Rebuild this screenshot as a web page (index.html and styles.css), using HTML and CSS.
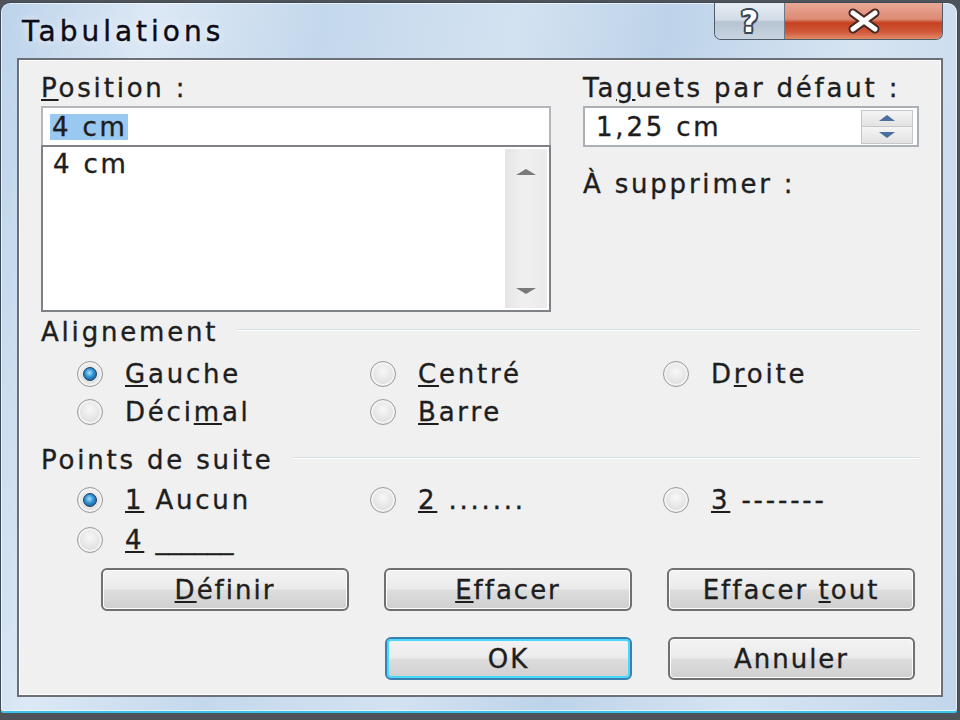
FILE: index.html
```html
<!DOCTYPE html>
<html lang="fr">

<head>
  <meta charset="UTF-8">
  <title>Tabulations</title>
  <link rel="stylesheet" href="styles.css">
</head>

<body>

  <div class="window">

    <!-- barre de titre -->
    <div class="titlebar">
      <span class="title">Tabulations</span>
      <div class="caption-btns">
        <div class="cap-help">?</div>
        <div class="cap-close">
          <svg width="44" height="26" viewBox="0 0 44 26">
            <path d="M11 5 L33 21 M33 5 L11 21" stroke="#4a2a24" stroke-width="9" stroke-linecap="round" fill="none" />
            <path d="M11 5 L33 21 M33 5 L11 21" stroke="#fff" stroke-width="5" stroke-linecap="round" fill="none" />
          </svg>
        </div>
      </div>
    </div>

    <div class="content">

      <div class="top">
        <div class="col-left">
          <div class="label"><u>P</u>osition :</div>
          <div class="input"><span class="sel">4 cm</span></div>
          <div class="listbox">
            <div class="list-items">4 cm</div>
            <div class="scrollbar">
              <span class="arrow-up"></span>
              <span class="arrow-down"></span>
            </div>
          </div>
        </div>
        <div class="col-right">
          <div class="label">Ta<u>g</u>uets par défaut :</div>
          <div class="spin">
            <span class="spin-value">1,25 cm</span>
            <div class="spin-btns">
              <div class="spin-up"><span></span></div>
              <div class="spin-down"><span></span></div>
            </div>
          </div>
          <div class="label delete-label">À supprimer :</div>
        </div>
      </div>

      <!-- Alignement -->
      <div class="group-title"><span>Alignement</span><i></i></div>
      <div class="radios">
        <label class="radio checked"><b></b><span><u>G</u>auche</span></label>
        <label class="radio"><b></b><span><u>C</u>entré</span></label>
        <label class="radio"><b></b><span>D<u>r</u>oite</span></label>
        <label class="radio"><b></b><span>Déci<u>m</u>al</span></label>
        <label class="radio"><b></b><span><u>B</u>arre</span></label>
      </div>

      <!-- Points de suite -->
      <div class="group-title"><span>Points de suite</span><i></i></div>
      <div class="radios leaders">
        <label class="radio checked"><b></b><span><u>1</u> Aucun</span></label>
        <label class="radio"><b></b><span><u>2</u> .......</span></label>
        <label class="radio"><b></b><span><u>3</u> -------</span></label>
        <label class="radio"><b></b><span><u>4</u> <span class="solid">______</span></span></label>
      </div>

      <div class="btn-row">
        <button class="btn"><u>D</u>éfinir</button>
        <button class="btn"><u>E</u>ffacer</button>
        <button class="btn">Effacer <u>t</u>out</button>
      </div>
      <div class="btn-row btn-row-end">
        <button class="btn btn-default">OK</button>
        <button class="btn">Annuler</button>
      </div>

    </div>
  </div>

</body>

</html>
```

FILE: styles.css
```css
body {
  margin: 0;
  background: #4d5358;
  font-family: "DejaVu Sans", "Noto Sans", sans-serif;
  color: #1e1e1e;
  overflow: hidden;
}

.window {
  margin-top: 2px;
  width: 956px;
  height: 708px;
  border: 1px solid #3d4a57;
  border-bottom: 2px solid #38c4e8;
  border-radius: 10px 10px 4px 4px;
  background: linear-gradient(100deg, #bcd3ea 0%, #dce8f5 14%, #c4d8ec 30%, #d3e2f1 48%, #bed3e9 62%, #d6e4f2 80%, #c2d6eb 100%);
  box-shadow: inset 0 0 0 1px rgba(255, 255, 255, 0.6);
}

/* barre de titre */
.titlebar {
  height: 55px;
  display: flex;
  align-items: flex-start;
}

.title {
  font-size: 28px;
  letter-spacing: 4px;
  margin: 12px 0 0 21px;
  color: #0c0c18;
  -webkit-text-stroke: 0.4px #0c0c18;
  text-shadow: 0 0 8px rgba(255, 255, 255, 0.9);
}

.caption-btns {
  margin-left: auto;
  margin-right: 14px;
  display: flex;
  height: 36px;
  border: 1px solid #4f5d6b;
  border-top: none;
  border-radius: 0 0 7px 7px;
  overflow: hidden;
}

.cap-help {
  width: 69px;
  display: flex;
  justify-content: center;
  align-items: center;
  font-weight: bold;
  font-size: 30px;
  color: #fff;
  text-shadow: -1.5px -1.5px 0 #3b4652, 1.5px -1.5px 0 #3b4652, -1.5px 1.5px 0 #3b4652, 1.5px 1.5px 0 #3b4652, 0 2px 0 #3b4652, 0 -2px 0 #3b4652, 2px 0 0 #3b4652, -2px 0 0 #3b4652;
  background: linear-gradient(#e6ecf2 0%, #d1dbe6 48%, #b6c3d2 52%, #c8d4e0 100%);
  border-right: 1px solid #6b7886;
}

.cap-close {
  width: 157px;
  display: flex;
  justify-content: center;
  align-items: center;
  background: linear-gradient(#e9a896 0%, #dc8a74 45%, #c5401f 55%, #d0583a 80%, #e28a68 100%);
}

/* zone cliente */
.content {
  box-sizing: border-box;
  margin-left: 16px;
  width: 926px;
  height: 639px;
  background: #f0f0f0;
  border: 2px solid #6c7076;
  box-shadow: inset 0 0 0 1px #ffffff;
  padding: 12px 22px 0 22px;
  font-size: 26px;
  letter-spacing: 2.8px;
  -webkit-text-stroke: 0.35px #1e1e1e;
}

.top {
  display: flex;
  justify-content: space-between;
}

.label {
  line-height: 32px;
  height: 34px;
}

.col-left {
  width: 510px;
}

.col-right {
  width: 336px;
}

.input {
  height: 37px;
  background: #fff;
  border: 2px solid #b4b8bd;
  border-bottom: none;
  display: flex;
  align-items: center;
  padding-left: 7px;
}

.sel {
  background: #99c9f0;
  line-height: 26px;
  padding: 0 0 0 2px;
}

.listbox {
  height: 159px;
  background: #fff;
  border: 2px solid #7e8287;
  display: flex;
  padding: 2px 2px 2px 0;
}

.list-items {
  flex: 1;
  line-height: 30px;
  padding: 0 0 0 10px;
}

.scrollbar {
  width: 42px;
  background: linear-gradient(90deg, #e4e4e4, #f0f0f0 40%, #ebebeb);
  display: flex;
  flex-direction: column;
  justify-content: space-between;
  align-items: center;
  padding: 20px 0 14px;
}

.arrow-up,
.arrow-down {
  width: 0;
  height: 0;
  border-left: 10px solid transparent;
  border-right: 10px solid transparent;
}

.arrow-up {
  border-bottom: 6px solid #7a7a7a;
}

.arrow-down {
  border-top: 6px solid #7a7a7a;
}

.spin {
  height: 37px;
  background: #fff;
  border: 2px solid #abb0b6;
  display: flex;
  align-items: center;
  padding: 0 4px 0 11px;
}

.spin-value {
  flex: 1;
}

.spin-btns {
  width: 50px;
  height: 32px;
  display: flex;
  flex-direction: column;
  border: 1px solid #c4c8cc;
}

.spin-up,
.spin-down {
  flex: 1;
  display: flex;
  justify-content: center;
  align-items: center;
  background: linear-gradient(#f4f4f4, #e2e2e2);
}

.spin-up {
  border-bottom: 1px solid #c4c8cc;
}

.spin-up span,
.spin-down span {
  border-left: 8px solid transparent;
  border-right: 8px solid transparent;
}

.spin-up span {
  border-bottom: 6px solid #4a6f9e;
}

.spin-down span {
  border-top: 6px solid #4a6f9e;
}

.delete-label {
  margin-top: 21px;
}

/* groupes */
.group-title {
  display: flex;
  align-items: center;
  margin-top: 4px;
  line-height: 32px;
}

.group-title i {
  flex: 1;
  height: 1px;
  background: #d6dfe4;
  border-bottom: 1px solid #fff;
  margin: 0 0 4px 18px;
}

.radios {
  display: grid;
  grid-template-columns: 293px 293px 1fr;
  row-gap: 6px;
  padding: 10px 0 12px 36px;
}

.leaders {
  row-gap: 8px;
  padding: 8px 0 12px 36px;
}

.radio {
  display: flex;
  align-items: center;
  gap: 22px;
  line-height: 32px;
}

.solid {
  letter-spacing: 0;
}

.radio b {
  flex: none;
  width: 24px;
  height: 24px;
  border-radius: 50%;
  border: 1px solid #9a9a9a;
  background: radial-gradient(circle at 50% 40%, #f8f8f8 0%, #e4e4e4 55%, #c9c9c9 100%);
  box-shadow: inset 0 0 0 2px #f4f4f4;
  display: flex;
  justify-content: center;
  align-items: center;
}

.radio.checked b::after {
  content: "";
  width: 12px;
  height: 12px;
  border-radius: 50%;
  background: radial-gradient(circle at 45% 40%, #a6e1fb 0%, #2d8fd0 45%, #14467a 100%);
  border: 1px solid #1d3c5c;
}

/* boutons */
.btn-row {
  display: grid;
  grid-template-columns: repeat(3, 248px);
  column-gap: 35px;
  justify-content: end;
  padding-right: 4px;
  margin-top: 0;
}

.btn-row-end {
  grid-template-columns: repeat(2, 247px);
  column-gap: 36px;
  margin-top: 26px;
}

.btn {
  height: 43px;
  font-family: inherit;
  font-size: 26px;
  letter-spacing: 2px;
  color: #1e1e1e;
  -webkit-text-stroke: 0.35px #1e1e1e;
  border: 2px solid #707070;
  border-radius: 6px;
  background: linear-gradient(#f3f3f3 0%, #ebebeb 48%, #dddddd 52%, #cfcfcf 100%);
  box-shadow: inset 0 0 0 1px #fcfcfc;
  padding: 0;
}

.btn-default {
  border-color: #3c7fb1;
  box-shadow: inset 0 0 0 2px #48d8fb;
}
```
